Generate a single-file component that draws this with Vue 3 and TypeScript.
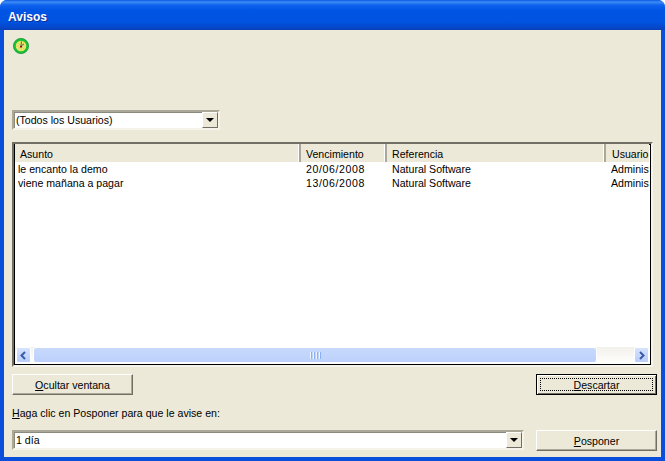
<script setup lang="ts">
interface Row { asunto: string; venc: string; ref: string; user: string }
const rows: Row[] = [
  { asunto: 'le encanto la demo', venc: '20/06/2008', ref: 'Natural Software', user: 'Administrador' },
  { asunto: 'viene mañana a pagar', venc: '13/06/2008', ref: 'Natural Software', user: 'Administrador' },
]
</script>

<template>
  <div class="window">
    <div class="titlebar">Avisos</div>
    <div class="client">
      <svg class="clock" width="16" height="16" viewBox="0 0 16 16">
        <circle cx="8" cy="8" r="6.500" fill="#efe860" stroke="#1cc236" stroke-width="2.500" />
        <circle cx="8" cy="8" r="7.600" fill="none" stroke="#0f8a3a" stroke-width="0.600" />
        <path d="M8 3v10M3 8h10M4.500 4.500l7 7M11.500 4.500l-7 7" stroke="#c9cf8a" stroke-width="0.800" />
        <path d="M8.500 3.500L8 8l3-2" fill="none" stroke="#6a6a40" stroke-width="1" />
        <rect x="7" y="8" width="2" height="1.500" fill="#901010" />
      </svg>

      <div class="combo user-combo">
        <span class="combo-text">(Todos los Usuarios)</span>
        <span class="combo-btn"><i class="arrow"></i></span>
      </div>

      <div class="list">
        <div class="list-head">
          <div class="hcell c1">Asunto</div>
          <div class="hcell c2">Vencimiento</div>
          <div class="hcell c3">Referencia</div>
          <div class="hcell c4">Usuario</div>
        </div>
        <div class="list-body">
          <div v-for="r in rows" :key="r.venc" class="row">
            <div class="cell c1">{{ r.asunto }}</div>
            <div class="cell c2 date">{{ r.venc }}</div>
            <div class="cell c3">{{ r.ref }}</div>
            <div class="cell c4">{{ r.user }}</div>
          </div>
        </div>
        <div class="hscroll">
          <div class="sb-btn">
            <svg width="15" height="15" viewBox="0 0 15 15"><path d="M9 4L5.500 7.500 9 11" fill="none" stroke="#3d5aa8" stroke-width="2" /></svg>
          </div>
          <div class="sb-thumb">
            <span class="grip"><i></i><i></i><i></i><i></i></span>
          </div>
          <div class="sb-track"></div>
          <div class="sb-btn">
            <svg width="15" height="15" viewBox="0 0 15 15"><path d="M6 4l3.500 3.500L6 11" fill="none" stroke="#3d5aa8" stroke-width="2" /></svg>
          </div>
        </div>
      </div>

      <div class="button-row">
        <button class="btn"><u>O</u>cultar ventana</button>
        <button class="btn default"><span class="focus"><u>D</u>escartar</span></button>
      </div>

      <div class="hint"><u>H</u>aga clic en Posponer para que le avise en:</div>

      <div class="bottom-row">
        <div class="combo day-combo">
          <span class="combo-text">1 día</span>
          <span class="combo-btn"><i class="arrow"></i></span>
        </div>
        <button class="btn post"><u>P</u>osponer</button>
      </div>
    </div>
  </div>
</template>

<style>
html, body { margin: 0; background: #fff; }
</style>

<style scoped>
.window {
  width: 665px;
  height: 461px;
  box-sizing: border-box;
  display: flex;
  flex-direction: column;
  background: #0a4fdc;
  border-radius: 7px 7px 0 0;
  overflow: hidden;
  font-family: "Liberation Sans", Arial, sans-serif;
  font-size: 10.6px;
  color: #000;
}
.titlebar {
  height: 30px;
  flex: none;
  box-sizing: border-box;
  padding: 9px 0 0 8px;
  color: #fff;
  font-family: "Liberation Sans", Arial, sans-serif;
  font-weight: 700;
  font-size: 12px;
  line-height: 16px;
  text-shadow: 1px 1px 0 #0a2f9a;
  background: linear-gradient(#0a58e6 0, #3f8cf3 2px, #0f63ee 5px, #0055e5 10px, #0053e0 22px, #0648cc 27px, #0a3fb8 30px);
}
.client {
  flex: none;
  height: 427px;
  margin: 0 4px;
  box-sizing: border-box;
  background: #ece9d8;
  padding: 8px 4px 0 8px;
  display: flex;
  flex-direction: column;
}
.clock { display: block; margin-left: 1px; }
.combo {
  box-sizing: border-box;
  display: flex;
  align-items: center;
  background: #fff;
  height: 20px;
  border: 2px solid;
  border-color: #aca899 #f5f3ea #f5f3ea #aca899;
  box-shadow: inset 1px 1px 0 #8c8a7c;
}
.user-combo { width: 208px; margin-top: 56px; }
.combo-text { flex: 1; padding-left: 2px; white-space: nowrap; }
.combo-btn {
  width: 16px;
  height: 16px;
  box-sizing: border-box;
  flex: none;
  display: flex;
  align-items: center;
  justify-content: center;
  background: #ece9d8;
  border: 1px solid;
  border-color: #fff #716f64 #716f64 #fff;
}
.arrow {
  width: 0;
  height: 0;
  border: 4px solid transparent;
  border-top-color: #000;
  border-bottom: 0;
}
.list {
  box-sizing: border-box;
  width: 641px;
  height: 225px;
  margin-top: 12px;
  border: 2px solid #000;
  border-color: #716f64 #f5f3ea #f5f3ea #716f64;
  box-shadow: inset 1px 1px 0 #000, inset -1px -1px 0 #000;
  padding: 0 2px 2px 1px;
  display: flex;
  flex-direction: column;
  background: #fff;
}
.list-head {
  display: flex;
  height: 18px;
  flex: none;
  background: #ece9d8;
  overflow: hidden;
}
.hcell {
  box-sizing: border-box;
  padding: 2px 0 0 5px;
  line-height: 16px;
  border-right: 2px solid;
  border-right-color: #aca899;
  box-shadow: inset -1px 0 0 #fff;
  white-space: nowrap;
}
.c1 { width: 286px; flex: none; }
.c2 { width: 86px; flex: none; }
.c3 { width: 219px; flex: none; }
.c4 { width: 46px; flex: none; }
.list-head .c4 { border-right: 0; box-shadow: none; padding-left: 6px; }
.list-body { flex: 1; overflow: hidden; }
.row { display: flex; height: 14px; line-height: 14px; }
.cell { box-sizing: border-box; padding-left: 3px; white-space: nowrap; overflow: hidden; }
.row .c2, .row .c3, .row .c4 { padding-left: 5px; }
.date { letter-spacing: 0.6px; }
.hscroll {
  flex: none;
  height: 16px;
  display: flex;
  align-items: stretch;
  padding-left: 1px;
  background: linear-gradient(#f3f1ec, #fefefb);
}
.sb-btn {
  width: 15px;
  flex: none;
  border-radius: 2px;
  border: 1px solid #fff;
  box-sizing: border-box;
  display: flex;
  align-items: center;
  justify-content: center;
  background: linear-gradient(#d6e3ff, #b8cdf9);
}
.sb-btn svg { flex: none; margin: -1px; }
.sb-thumb {
  width: 564px;
  flex: none;
  margin-left: 2px;
  border: 1px solid #fff;
  border-radius: 3px;
  box-sizing: border-box;
  background: linear-gradient(#c8d9fd, #bcd1fb);
  display: flex;
  align-items: center;
  justify-content: center;
}
.grip { display: flex; gap: 1px; }
.grip i { display: block; width: 2px; height: 7px; background: linear-gradient(90deg, #eef4ff 50%, #8cb0f8 50%); }
.sb-track { flex: 1; }
.button-row {
  display: flex;
  justify-content: space-between;
  margin-top: 7px;
  width: 645px;
}
.btn {
  box-sizing: border-box;
  width: 121px;
  height: 21px;
  padding: 0;
  font: inherit;
  color: #000;
  background: #ece9d8;
  border: 1px solid;
  border-color: #fff #716f64 #716f64 #fff;
  box-shadow: inset -1px -1px 0 #aca899;
  display: flex;
  align-items: center;
  justify-content: center;
}
.default {
  border: 1px solid #000;
  box-shadow: inset 1px 1px 0 #fff, inset -1px -1px 0 #716f64;
  padding: 3px;
}
.focus {
  width: 100%;
  height: 100%;
  box-sizing: border-box;
  border: 1px dotted #000;
  display: flex;
  align-items: center;
  justify-content: center;
}
.hint { margin-top: 11px; line-height: 14px; white-space: nowrap; }
.bottom-row {
  display: flex;
  justify-content: space-between;
  align-items: flex-start;
  margin-top: 10px;
  width: 645px;
}
.day-combo { width: 512px; }
</style>
